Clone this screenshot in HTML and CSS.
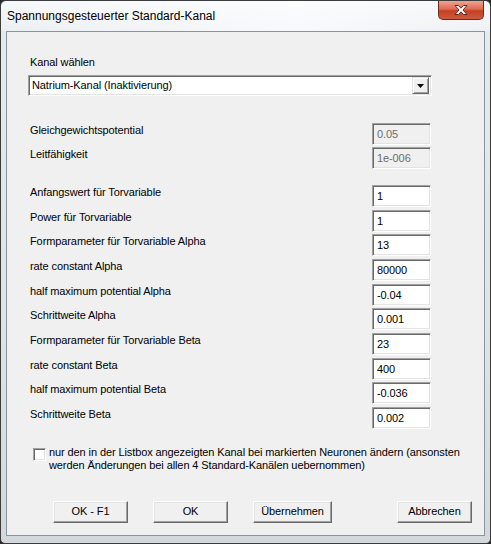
FILE: index.html
```html
<!DOCTYPE html>
<html lang="de">
<head>
<meta charset="utf-8">
<title>Spannungsgesteuerter Standard-Kanal</title>
<link rel="stylesheet" href="styles.css">
</head>
<body>
<div class="window">
  <div class="titlebar">
    <span class="title">Spannungsgesteuerter Standard-Kanal</span>
    <div class="close">
      <svg width="18" height="12" viewBox="0 0 18 12">
        <path d="M3 1.5 L6.5 1.5 L9 4.2 L11.5 1.5 L15 1.5 L11 6 L15 10.5 L11.5 10.5 L9 7.8 L6.5 10.5 L3 10.5 L7 6 Z" fill="#fff" stroke="#5a2a20" stroke-width="1" stroke-linejoin="round"/>
      </svg>
    </div>
  </div>
  <div class="client">
    <div class="label top">Kanal wählen</div>
    <div class="combo">
      <span class="combo-text">Natrium-Kanal (Inaktivierung)</span>
      <span class="combo-btn"><svg width="7" height="4" viewBox="0 0 7 4"><path d="M0 0 H7 L3.5 4 Z" fill="#000"/></svg></span>
    </div>

    <div class="group g1">
      <div class="row"><span class="label">Gleichgewichtspotential</span><span class="field disabled">0.05</span></div>
      <div class="row"><span class="label">Leitfähigkeit</span><span class="field disabled">1e-006</span></div>
    </div>

    <div class="group g2">
      <div class="row"><span class="label">Anfangswert für Torvariable</span><span class="field">1</span></div>
      <div class="row"><span class="label">Power für Torvariable</span><span class="field">1</span></div>
      <div class="row"><span class="label">Formparameter für Torvariable Alpha</span><span class="field">13</span></div>
      <div class="row"><span class="label">rate constant Alpha</span><span class="field">80000</span></div>
      <div class="row"><span class="label">half maximum potential Alpha</span><span class="field">-0.04</span></div>
      <div class="row"><span class="label">Schrittweite Alpha</span><span class="field">0.001</span></div>
      <div class="row"><span class="label">Formparameter für Torvariable Beta</span><span class="field">23</span></div>
      <div class="row"><span class="label">rate constant Beta</span><span class="field">400</span></div>
      <div class="row"><span class="label">half maximum potential Beta</span><span class="field">-0.036</span></div>
      <div class="row"><span class="label">Schrittweite Beta</span><span class="field">0.002</span></div>
    </div>

    <div class="check">
      <span class="box"></span>
      <span class="check-text">nur den in der Listbox angezeigten Kanal bei markierten Neuronen ändern (ansonsten<br>werden Änderungen bei allen 4 Standard-Kanälen uebernommen)</span>
    </div>

    <div class="buttons">
      <span class="btn b1">OK - F1</span>
      <span class="btn b2">OK</span>
      <span class="btn b3">Übernehmen</span>
      <span class="btn b4">Abbrechen</span>
    </div>
  </div>
</div>
</body>
</html>
```
FILE: styles.css
```css
html, body {
  margin: 0;
  padding: 0;
  background: #2a2a2a;
}
body {
  width: 491px;
  height: 544px;
  overflow: hidden;
  font-family: "Liberation Sans", Arial, sans-serif;
  font-size: 11px;
  letter-spacing: -0.1px;
  color: #000;
}
.window {
  box-sizing: border-box;
  width: 491px;
  height: 544px;
  border: 1px solid #3c3c3c;
  border-radius: 6px 6px 5px 5px;
  background: linear-gradient(180deg, #f4f6f8 0%, #e6eaee 6%, #dfe3e7 60%, #d3d8dd 100%);
  display: flex;
  flex-direction: column;
}
.titlebar {
  height: 30px;
  display: flex;
  justify-content: space-between;
  align-items: flex-start;
  background: linear-gradient(90deg, rgba(255,255,255,0.2), rgba(255,255,255,0.7) 60%, rgba(255,255,255,0.3));
  border-radius: 5px 5px 0 0;
}
.title {
  font-size: 12px;
  letter-spacing: 0;
  padding: 8px 0 0 6px;
  line-height: 14px;
  color: #000;
}
.close {
  width: 46px;
  height: 19px;
  margin-right: 6px;
  box-sizing: border-box;
  border: 1px solid #6b2b1e;
  border-top: none;
  border-radius: 0 0 5px 5px;
  background: linear-gradient(180deg, #eba593 0%, #de6a50 45%, #c63f22 55%, #cd5a3e 100%);
  display: flex;
  align-items: center;
  justify-content: center;
}
.close svg { display: block; }
.client {
  box-sizing: border-box;
  margin: 0 5px;
  height: 505px;
  border: 1px solid #8a949e;
  background: #f0f0f0;
  padding: 24px 53px 0 23px;
  display: flex;
  flex-direction: column;
}
.label {
  line-height: 13px;
  white-space: nowrap;
}
.combo {
  box-sizing: border-box;
  margin-top: 6px;
  margin-left: -2px;
  width: 404px;
  height: 21px;
  background: #fff;
  border-top: 1px solid #a0a0a0;
  border-left: 1px solid #a0a0a0;
  border-right: 1px solid #fff;
  border-bottom: 1px solid #fff;
  box-shadow: inset 1px 1px 0 #696969, inset -1px -1px 0 #e3e3e3;
  display: flex;
  align-items: center;
  justify-content: space-between;
  padding: 0 2px 0 3px;
}
.combo-text { line-height: 13px; }
.combo-btn {
  box-sizing: border-box;
  width: 17px;
  height: 17px;
  background: #f0f0f0;
  border-top: 1px solid #e3e3e3;
  border-left: 1px solid #e3e3e3;
  border-right: 1px solid #696969;
  border-bottom: 1px solid #696969;
  box-shadow: inset 1px 1px 0 #fff, inset -1px -1px 0 #a0a0a0;
  display: flex;
  align-items: center;
  justify-content: center;
}
.combo-btn svg { display: block; }
.group {
  display: flex;
  flex-direction: column;
}
.g1 { margin-top: 27px; gap: 2px; }
.g2 { margin-top: 16px; gap: 2.67px; }
.row {
  display: flex;
  justify-content: space-between;
  align-items: flex-start;
}
.row .label { padding-top: 1px; }
.field {
  box-sizing: border-box;
  flex: none;
  width: 59px;
  height: 22px;
  background: #fff;
  border-top: 1px solid #a0a0a0;
  border-left: 1px solid #a0a0a0;
  border-right: 1px solid #fff;
  border-bottom: 1px solid #fff;
  box-shadow: inset 1px 1px 0 #696969, inset -1px -1px 0 #e3e3e3;
  padding: 4px 0 0 4px;
  line-height: 13px;
}
.field.disabled {
  background: #f0f0f0;
  color: #6d6d6d;
}
.check {
  margin-top: 17px;
  display: flex;
  align-items: flex-start;
}
.box {
  box-sizing: border-box;
  flex: none;
  width: 13px;
  height: 13px;
  margin: 2px 0 0 3px;
  background: #fff;
  border-top: 1px solid #a0a0a0;
  border-left: 1px solid #a0a0a0;
  border-right: 1px solid #fff;
  border-bottom: 1px solid #fff;
  box-shadow: inset 1px 1px 0 #696969, inset -1px -1px 0 #e3e3e3;
}
.check-text {
  margin-left: 3px;
  line-height: 13px;
  white-space: nowrap;
}
.buttons {
  margin: 29px -53px 0 -23px;
  padding-left: 46px;
  display: flex;
}
.btn {
  box-sizing: border-box;
  flex: none;
  height: 22px;
  width: 75px;
  background: #f0f0f0;
  border-top: 1px solid #fff;
  border-left: 1px solid #fff;
  border-right: 1px solid #696969;
  border-bottom: 1px solid #696969;
  box-shadow: inset -1px -1px 0 #a0a0a0, inset 1px 1px 0 #e3e3e3;
  display: flex;
  align-items: center;
  justify-content: center;
  line-height: 13px;
}
.b2 { margin-left: 25px; }
.b3 { margin-left: 25px; width: 79px; }
.b4 { margin-left: 65px; }
```
